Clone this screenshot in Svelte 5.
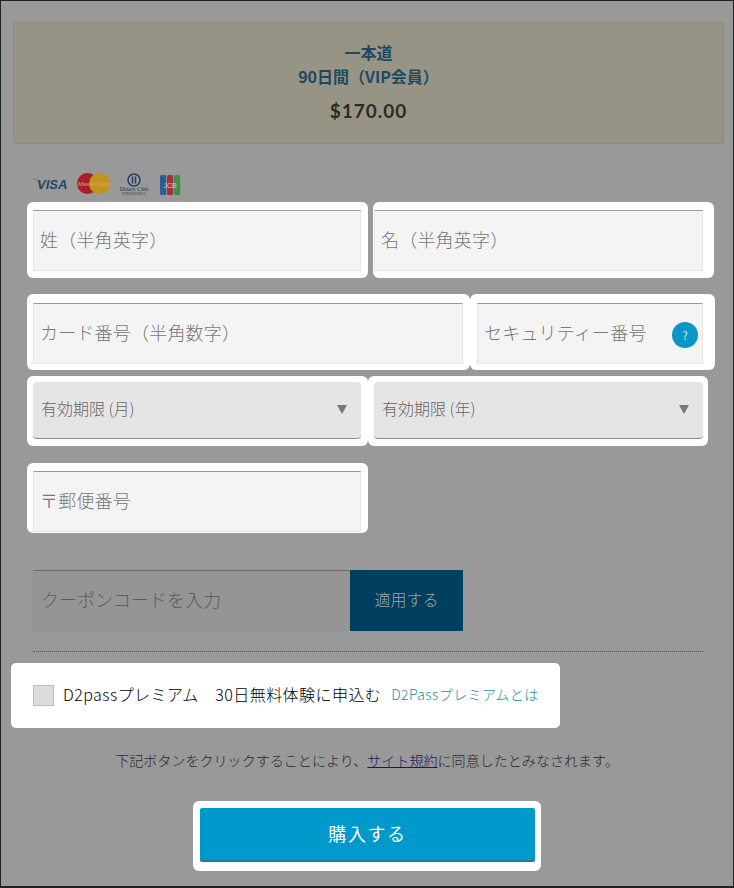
<script>
    let first = '';
    let last = '';
    let card = '';
    let cvc = '';
    let month = '';
    let year = '';
    let zip = '';
    let coupon = '';
    let premium = false;
</script>

<div class="page">
    <section class="plan">
        <h2>一本道<br />90日間（VIP会員）</h2>
        <p class="price">$170.00</p>
    </section>

    <div class="cards">
        <svg width="150" height="26" viewBox="0 0 150 26">
            <path d="M0 8 C3 9 6 11 8 18 L9.500 18 C8 12 5 8 0 7 Z" fill="#9a7b45" />
            <text x="4" y="17.500" class="visa">VISA</text>
            <circle cx="54.500" cy="12.500" r="10.500" fill="#a81d30" />
            <circle cx="66.500" cy="12.500" r="10.500" fill="#c4921f" />
            <text x="60.500" y="14.500" class="mc">MasterCard</text>
            <circle cx="101" cy="9" r="6" fill="none" stroke="#22405f" stroke-width="1.500" />
            <path d="M99.500 5.500 V12.500 M102.500 5.500 V12.500" stroke="#22405f" stroke-width="1.500" />
            <text x="101" y="20" class="diners">Diners Club</text>
            <text x="101" y="24" class="diners small">INTERNATIONAL</text>
            <rect x="127" y="4" width="6.200" height="20" rx="1.500" fill="#2c5c93" />
            <rect x="134" y="4" width="6.200" height="20" rx="1.500" fill="#a8303d" />
            <rect x="141" y="4" width="6.200" height="20" rx="1.500" fill="#3f8f4b" />
            <text x="137" y="16.500" class="jcb">JCB</text>
        </svg>
    </div>

    <div class="row row-name">
        <div class="spot name-a"><input class="field" bind:value={first} placeholder="姓（半角英字）" /></div>
        <div class="spot name-b"><input class="field" bind:value={last} placeholder="名（半角英字）" /></div>
    </div>

    <div class="row row-card">
        <div class="spot card-a"><input class="field" bind:value={card} placeholder="カード番号（半角数字）" /></div>
        <div class="spot card-b">
            <input class="field" bind:value={cvc} placeholder="セキュリティー番号" />
            <span class="help">?</span>
        </div>
    </div>

    <div class="row row-exp">
        <div class="spot exp-a">
            <div class="select-wrap">
                <select bind:value={month}><option value="">有効期限 (月)</option></select>
                <span class="arrow"></span>
            </div>
        </div>
        <div class="spot exp-b">
            <div class="select-wrap">
                <select bind:value={year}><option value="">有効期限 (年)</option></select>
                <span class="arrow"></span>
            </div>
        </div>
    </div>

    <div class="row row-zip">
        <div class="spot zip"><input class="field" bind:value={zip} placeholder="〒郵便番号" /></div>
    </div>

    <div class="coupon">
        <input bind:value={coupon} placeholder="クーポンコードを入力" />
        <button type="button">適用する</button>
    </div>

    <hr />

    <div class="premium">
        <input type="checkbox" bind:checked={premium} id="premium" />
        <label for="premium">D2passプレミアム　30日無料体験に申込む</label>
        <a href="#premium">D2Passプレミアムとは</a>
    </div>

    <p class="terms">下記ボタンをクリックすることにより、<a href="#terms">サイト規約</a>に同意したとみなされます。</p>

    <div class="buy-spot">
        <button type="button" class="buy">購入する</button>
    </div>
</div>

<style>
    :global(body) {
        margin: 0;
    }

    .page {
        box-sizing: border-box;
        width: 734px;
        height: 888px;
        padding-top: 21px;
        overflow: hidden;
        background: #999;
        border: 1px solid #222;
        border-bottom-width: 2px;
        font-family: "Noto Sans CJK JP", "Noto Sans", sans-serif;
        font-weight: 300;
    }

    .plan {
        box-sizing: border-box;
        width: 711px;
        height: 122px;
        margin-left: 12px;
        padding-top: 17px;
        background: #989485;
        border: 1px solid #8f8c80;
        text-align: center;
    }

    .plan h2 {
        margin: 0;
        color: #1d4a63;
        font-size: 16px;
        font-weight: 700;
        line-height: 24px;
    }

    .price {
        margin: 10px 0 0;
        color: #2b2b26;
        font-family: Lato, sans-serif;
        font-size: 19px;
        font-weight: 700;
        letter-spacing: 1px;
        line-height: 26px;
    }

    .cards {
        height: 58px;
        margin-left: 32px;
        padding-top: 27px;
        box-sizing: border-box;
    }

    .cards svg {
        display: block;
    }

    .visa {
        fill: #24476e;
        font-family: "Liberation Sans", sans-serif;
        font-size: 13px;
        font-style: italic;
        font-weight: 700;
    }

    .mc {
        fill: #d9b060;
        font-family: "Liberation Sans", sans-serif;
        font-size: 6px;
        font-style: italic;
        text-anchor: middle;
    }

    .diners {
        fill: #2c3a4a;
        font-family: "Liberation Serif", serif;
        font-size: 6px;
        text-anchor: middle;
    }

    .diners.small {
        font-size: 3px;
    }

    .jcb {
        fill: #c9d2d8;
        font-family: "Liberation Sans", sans-serif;
        font-size: 7px;
        text-anchor: middle;
    }

    .row {
        display: flex;
        margin-left: 26px;
    }

    .row-name {
        gap: 5px;
    }

    .row-card {
        margin-top: 16px;
    }

    .row-exp {
        margin-top: 6px;
    }

    .row-zip {
        margin-top: 17px;
    }

    .spot {
        position: relative;
        box-sizing: border-box;
        background: #fff;
        border-radius: 6px;
    }

    .name-a,
    .name-b {
        width: 341px;
        height: 76px;
        padding: 8px 7px 7px 6px;
    }

    .name-b {
        padding: 8px 11px 7px 1px;
    }

    .card-a {
        width: 443px;
        height: 76px;
        padding: 9px 7px 6px 6px;
    }

    .card-b {
        width: 245px;
        height: 76px;
        padding: 9px 12px 6px 7px;
    }

    .exp-a,
    .exp-b {
        width: 341px;
        height: 70px;
        padding: 6px 7px 7px 6px;
    }

    .exp-b {
        width: 340px;
        padding: 6px 5px 7px 6px;
    }

    .zip {
        width: 341px;
        height: 70px;
        padding: 8px 7px 1px 6px;
    }

    .field {
        display: block;
        box-sizing: border-box;
        width: 100%;
        height: 100%;
        padding: 0 6px 4px;
        background: #f4f4f4;
        border: 1px solid #e6e6e6;
        border-top-color: #999;
        border-radius: 0;
        outline: none;
        color: #333;
        font-family: inherit;
        font-size: 18px;
        font-weight: inherit;
        letter-spacing: 0.2px;
    }

    .field::placeholder {
        color: #777;
        opacity: 1;
    }

    .help {
        position: absolute;
        top: 28px;
        right: 17px;
        width: 26px;
        height: 26px;
        border-radius: 50%;
        background: #0b96c8;
        color: #dff1f8;
        font-size: 11px;
        font-weight: 400;
        line-height: 26px;
        text-align: center;
    }

    .select-wrap {
        position: relative;
        height: 100%;
    }

    select {
        display: block;
        box-sizing: border-box;
        width: 100%;
        height: 100%;
        padding: 0 8px 4px;
        appearance: none;
        background: #e5e5e5;
        border: 0;
        border-bottom: 1px solid #8a8a8a;
        border-radius: 4px;
        color: #666;
        font-family: inherit;
        font-size: 16px;
        font-weight: inherit;
    }

    .arrow {
        position: absolute;
        top: 23px;
        right: 14px;
        border-top: 9px solid #777;
        border-left: 5px solid transparent;
        border-right: 5px solid transparent;
    }

    .coupon {
        display: flex;
        height: 61px;
        margin: 37px 0 0 32px;
    }

    .coupon input {
        box-sizing: border-box;
        width: 317px;
        height: 100%;
        padding: 0 7px 4px;
        background: #959595;
        border: 1px solid #919191;
        border-top-color: #666;
        border-radius: 0;
        outline: none;
        font-family: inherit;
        font-size: 18px;
        font-weight: inherit;
    }

    .coupon input::placeholder {
        color: #5c5c5c;
        opacity: 1;
    }

    .coupon button {
        width: 113px;
        height: 100%;
        padding: 0 0 4px;
        background: #003f60;
        border: 0;
        color: #a3a3a3;
        font-family: inherit;
        font-size: 16px;
        font-weight: inherit;
    }

    hr {
        width: 670px;
        height: 0;
        margin: 20px 0 0 32px;
        border: 0;
        border-top: 1px dotted #555;
    }

    .premium {
        display: flex;
        align-items: center;
        box-sizing: border-box;
        width: 549px;
        height: 65px;
        margin: 11px 0 0 10px;
        padding-left: 22px;
        background: #fff;
        border-radius: 5px;
    }

    .premium input {
        width: 21px;
        height: 21px;
        margin: 0 9px 0 0;
        appearance: none;
        background: #dcdcdc;
        border: 1px solid #bdbdbd;
        border-radius: 0;
    }

    .premium label {
        padding-bottom: 4px;
        color: #000;
        font-size: 16px;
        letter-spacing: 0.45px;
        white-space: nowrap;
    }

    .premium a {
        margin-left: 10px;
        padding-bottom: 4px;
        color: #2a8aa6;
        font-size: 14px;
        letter-spacing: 0.4px;
        text-decoration: none;
        white-space: nowrap;
    }

    .terms {
        margin: 21px 0 0;
        color: #2a2a2a;
        font-size: 14px;
        letter-spacing: 0.05px;
        line-height: 22px;
        text-align: center;
    }

    .terms a {
        color: #1a1a5c;
    }

    .buy-spot {
        box-sizing: border-box;
        width: 348px;
        height: 70px;
        margin: 30px 0 0 192px;
        padding: 7px 6px 9px 7px;
        background: #fff;
        border-radius: 6px;
    }

    .buy {
        display: block;
        width: 100%;
        height: 100%;
        padding: 0 0 2px;
        background: #0099cc;
        border: 0;
        border-bottom: 2px solid #1b7f9f;
        border-radius: 2px;
        color: #fff;
        font-family: inherit;
        font-size: 18px;
        font-weight: 400;
        letter-spacing: 1.6px;
    }
</style>
